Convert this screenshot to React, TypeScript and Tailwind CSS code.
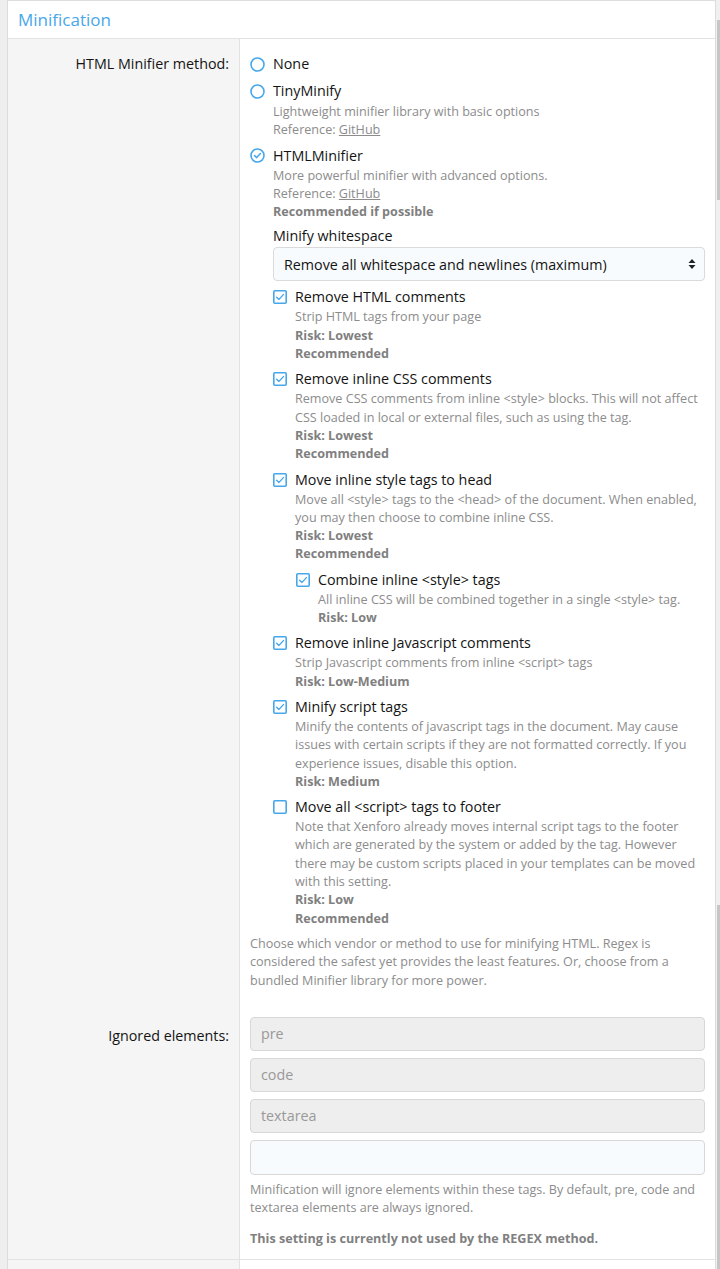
const font = "font-['Open_Sans','Segoe_UI',sans-serif]";

type Opt = {
  title: string;
  checked: boolean;
  desc?: string[];
  risk?: string;
  recommended?: boolean;
  children?: Opt[];
};

const options: Opt[] = [
  {
    title: "Remove HTML comments",
    checked: true,
    desc: ["Strip HTML tags from your page"],
    risk: "Risk: Lowest",
    recommended: true,
  },
  {
    title: "Remove inline CSS comments",
    checked: true,
    desc: [
      "Remove CSS comments from inline <style> blocks. This will not affect CSS loaded in local or external files, such as using the tag.",
    ],
    risk: "Risk: Lowest",
    recommended: true,
  },
  {
    title: "Move inline style tags to head",
    checked: true,
    desc: ["Move all <style> tags to the <head> of the document. When enabled, you may then choose to combine inline CSS."],
    risk: "Risk: Lowest",
    recommended: true,
    children: [
      {
        title: "Combine inline <style> tags",
        checked: true,
        desc: ["All inline CSS will be combined together in a single <style> tag."],
        risk: "Risk: Low",
      },
    ],
  },
  {
    title: "Remove inline Javascript comments",
    checked: true,
    desc: ["Strip Javascript comments from inline <script> tags"],
    risk: "Risk: Low-Medium",
  },
  {
    title: "Minify script tags",
    checked: true,
    desc: [
      "Minify the contents of javascript tags in the document. May cause issues with certain scripts if they are not formatted correctly. If you experience issues, disable this option.",
    ],
    risk: "Risk: Medium",
  },
  {
    title: "Move all <script> tags to footer",
    checked: false,
    desc: [
      "Note that Xenforo already moves internal script tags to the footer which are generated by the system or added by the tag. However there may be custom scripts placed in your templates can be moved with this setting.",
    ],
    risk: "Risk: Low",
    recommended: true,
  },
];

const title = "text-[14.3px] leading-[20px] text-[#141414]";
const small = "text-[12.6px] leading-[18.3px]";

function Radio({ checked }: { checked?: boolean }) {
  return (
    <svg width="15" height="15" viewBox="0 0 15 15" className="shrink-0">
      <circle cx="7.5" cy="7.5" r="6.5" fill="none" stroke="#47a7eb" strokeWidth="1.6" />
      {checked && (
        <path d="M4.6 7.6 L6.7 9.6 L10.4 5.6" fill="none" stroke="#47a7eb" strokeWidth="1.5" strokeLinecap="round" strokeLinejoin="round" />
      )}
    </svg>
  );
}

function Check({ checked }: { checked?: boolean }) {
  return (
    <svg width="14" height="14" viewBox="0 0 14 14" className="shrink-0">
      <rect x="0.8" y="0.8" width="12.4" height="12.4" rx="1" fill="#fff" stroke="#47a7eb" strokeWidth="1.6" />
      {checked && (
        <path d="M3.6 7.2 L6 9.4 L10.4 4.6" fill="none" stroke="#47a7eb" strokeWidth="1.4" strokeLinecap="round" strokeLinejoin="round" />
      )}
    </svg>
  );
}

function CheckOption({ opt }: { opt: Opt }) {
  return (
    <div className="flex gap-[8px] mt-[6px]">
      <div className="h-[20px] flex items-center">
        <Check checked={opt.checked} />
      </div>
      <div className="flex flex-col">
        <div className={title}>{opt.title}</div>
        <div className={`${small} mt-px`}>
          {opt.desc?.map((d) => (
            <div key={d} className="text-[#8c8c8c]">{d}</div>
          ))}
          {opt.risk && <div className="font-bold text-[#808080]">{opt.risk}</div>}
          {opt.recommended && <div className="font-bold text-[#808080]">Recommended</div>}
        </div>
        {opt.children?.map((c) => (
          <div key={c.title} className="ml-px">
            <CheckOption opt={c} />
          </div>
        ))}
      </div>
    </div>
  );
}

export default function App() {
  return (
    <div className={`${font} w-[720px] h-[1269px] bg-[#eeeeee] flex overflow-hidden`}>
      <div className="w-[7px] shrink-0 bg-[#eeeeee]" />
      <div className="w-[709px] shrink-0 bg-white border-l border-r border-[#dcdcdc] flex flex-col">
        <div className="h-px shrink-0 bg-[#dedede]" />
        <div className="h-[38px] shrink-0 border-b border-[#e3e3e3] flex items-center pl-[10px] text-[17px] text-[#47a7eb]">
          Minification
        </div>

        {/* method row */}
        <div className="flex shrink-0">
          <div className={`w-[232px] shrink-0 bg-[#f5f5f5] border-r border-[#e2e2e2] text-right pr-[10px] pt-[15px] ${title}`}>
            HTML Minifier method:
          </div>
          <div className="flex-1 pl-[10px] pr-[10px] pt-[15px] pb-[12px]">
            <div className="flex gap-[8px]">
              <div className="h-[20px] flex items-center"><Radio /></div>
              <div className={title}>None</div>
            </div>
            <div className="flex gap-[8px] mt-[7px]">
              <div className="h-[20px] flex items-center"><Radio /></div>
              <div>
                <div className={title}>TinyMinify</div>
                <div className={`${small} text-[#8c8c8c] mt-[2px]`}>
                  <div>Lightweight minifier library with basic options</div>
                  <div>Reference: <span className="underline">GitHub</span></div>
                </div>
              </div>
            </div>
            <div className="flex gap-[8px] mt-[6px]">
              <div className="h-[20px] flex items-center"><Radio checked /></div>
              <div className="flex-1">
                <div className={title}>HTMLMinifier</div>
                <div className={`${small} text-[#8c8c8c] mt-px`}>
                  <div>More powerful minifier with advanced options.</div>
                  <div>Reference: <span className="underline">GitHub</span></div>
                  <div className="font-bold text-[#808080]">Recommended if possible</div>
                </div>
                <div className={`${title} mt-[5px]`}>Minify whitespace</div>
                <div className="mt-px h-[34px] rounded-[4px] border border-[#dadada] bg-[#f8fbfd] flex items-center justify-between pl-[10px] pr-[8px]">
                  <span className="text-[14.3px] text-[#141414]">Remove all whitespace and newlines (maximum)</span>
                  <svg width="8" height="12" viewBox="0 0 8 12">
                    <path d="M4 1 L7.5 5 L0.5 5 Z M4 11 L7.5 7 L0.5 7 Z" fill="#222" />
                  </svg>
                </div>
                <div>
                  {options.map((o) => (
                    <CheckOption key={o.title} opt={o} />
                  ))}
                </div>
              </div>
            </div>
            <div className={`${small} text-[#8c8c8c] mt-[7px]`}>
              Choose which vendor or method to use for minifying HTML. Regex is considered the safest yet provides the least features. Or, choose from a bundled Minifier library for more power.
            </div>
          </div>
        </div>

        {/* ignored row */}
        <div className="flex shrink-0 border-b border-[#e3e3e3]">
          <div className={`w-[232px] shrink-0 bg-[#f5f5f5] border-r border-[#e2e2e2] text-right pr-[10px] pt-[24px] ${title}`}>
            Ignored elements:
          </div>
          <div className="flex-1 pl-[10px] pr-[10px] pt-[15px] pb-[10px]">
            <div className="flex flex-col gap-[7px]">
              {["pre", "code", "textarea"].map((t) => (
                <div key={t} className="h-[34px] rounded-[4px] border border-[#d8d8d8] bg-[#eeeeee] flex items-center pl-[10px] text-[14.3px] text-[#999]">
                  {t}
                </div>
              ))}
              <div className="h-[35px] rounded-[4px] border border-[#d8d8d8] bg-[#f8fbfd]" />
            </div>
            <div className={`${small} text-[#8c8c8c] mt-[6px]`}>
              Minification will ignore elements within these tags. By default, pre, code and textarea elements are always ignored.
            </div>
            <div className={`${small} font-bold text-[#808080] mt-[13px]`}>
              This setting is currently not used by the REGEX method.
            </div>
          </div>
        </div>
        <div className="flex-1 flex">
          <div className="w-[232px] shrink-0 bg-[#f5f5f5] border-r border-[#e2e2e2]" />
        </div>
      </div>
      <div className="relative w-[4px] shrink-0 bg-[#f0f0f0]">
        <div className="absolute left-[1px] right-0 top-[20px] h-[180px] bg-[#c6c6c6]" />
        <div className="absolute left-[1px] right-0 top-[905px] bottom-0 bg-[#c6c6c6]" />
      </div>
    </div>
  );
}
